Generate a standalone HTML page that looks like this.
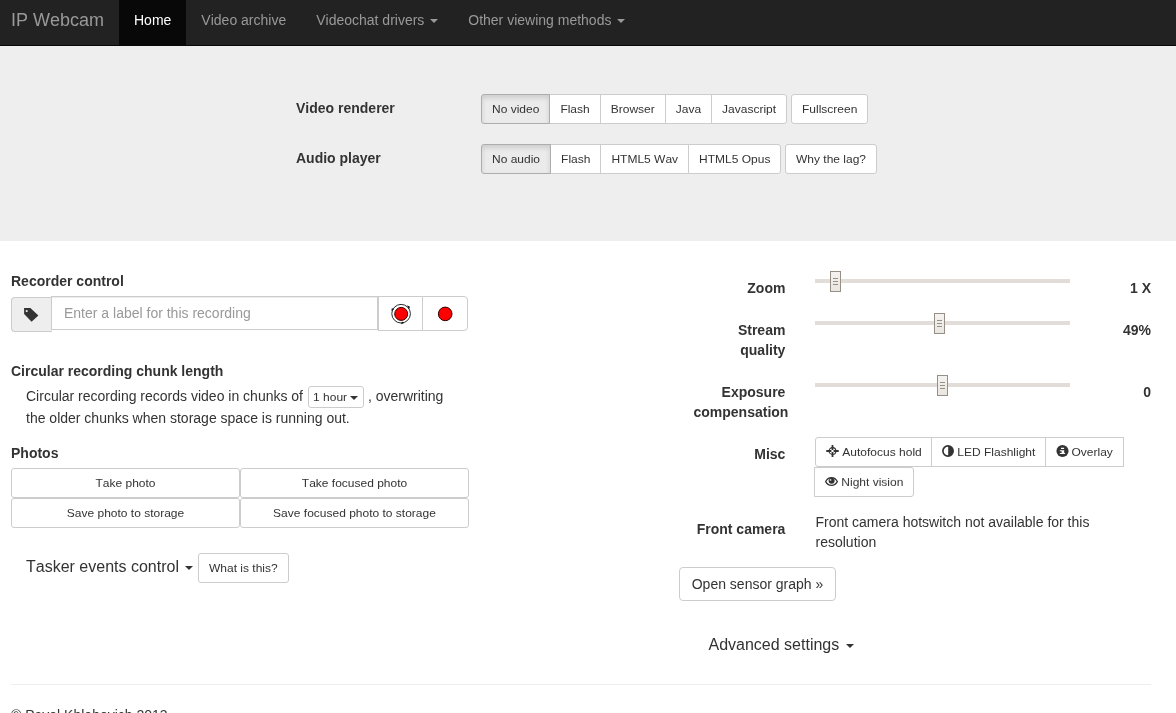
<!DOCTYPE html>
<html lang="en">
<head>
<meta charset="utf-8">
<title>IP Webcam</title>
<style>
*{box-sizing:border-box}
html,body{margin:0;padding:0}
html{overflow:hidden}
body{width:1176px;height:713px;overflow:hidden;position:relative;background:#fff;will-change:transform;
  font-family:"Liberation Sans",Arial,Helvetica,sans-serif;font-size:14px;line-height:20px;color:#333;font-kerning:none;font-variant-ligatures:none}
a{color:#333;text-decoration:none}
b,label,.lbl{font-weight:bold}

/* navbar */
.navbar{position:absolute;left:0;top:-5px;width:1176px;height:51px;background:#222;border-bottom:1px solid #080808}
.brand{position:absolute;left:11px;top:15px;font-size:18px;line-height:20px;color:#999}
.nav{position:absolute;top:0;left:119px;height:50px;margin:0;padding:0;list-style:none}
.nav li{float:left;height:50px;padding:15px 15px;color:#999;font-size:14px;line-height:20px}
.nav li.active{background:#080808;color:#fff}
.caret{display:inline-block;width:0;height:0;margin-left:2px;vertical-align:middle;
  border-top:4px solid;border-right:4px solid transparent;border-left:4px solid transparent}

/* grey top */
.jumbo{position:absolute;left:0;top:46px;width:1176px;height:195px;background:#eee}
.abs{position:absolute}
.btn{display:inline-block;float:left;background:#fff;border:1px solid #ccc;color:#333;
  font-size:12px;line-height:18px;padding:5px 10px;border-radius:3px;text-align:center;white-space:nowrap}
.grp{position:absolute;height:30px}
.grp .btn{border-radius:0;margin-left:-1px}
.grp .btn:first-child{margin-left:0;border-radius:3px 0 0 3px}
.grp .btn:last-child{border-radius:0 3px 3px 0}
.btn.active{background:#ebebeb;border-color:#adadad;box-shadow:inset 0 3px 5px rgba(0,0,0,.125);position:relative;z-index:2}
.flabel{position:absolute;font-weight:bold;font-size:14px;line-height:20px;white-space:nowrap}
.rlabel{position:absolute;font-weight:bold;text-align:right;width:140px;left:645.4px}
.val{position:absolute;font-weight:bold;text-align:right;width:60px;left:1091px}

/* lower */
.h{position:absolute;left:11px;font-weight:bold;white-space:nowrap}
.addon{position:absolute;left:11px;top:297px;width:41px;height:35px;background:#eee;border:1px solid #ccc;border-right:0;border-radius:4px 0 0 4px}
.inp{position:absolute;left:51px;top:296px;width:327px;height:34px;background:#fff;border:1px solid #ccc;
  box-shadow:inset 0 1px 1px rgba(0,0,0,.075);padding:6px 12px;color:#999;font-size:14px;line-height:20px;white-space:nowrap}
.rbtn{position:absolute;top:296px;height:35px;background:#fff;border:1px solid #ccc}
.para{position:absolute;left:26px;top:385px;width:443px;line-height:22px;white-space:nowrap}
.xs{display:inline-block;vertical-align:middle;border:1px solid #ccc;border-radius:3px;background:#fff;font-size:12px;line-height:18px;padding:1px 0;width:56.5px;text-align:center;height:22px;position:relative;top:0;margin:-3px 0 -3px .6px}
.pb{position:absolute;width:229px;height:30px;border:1px solid #ccc;border-radius:3px;background:#fff;font-size:12px;line-height:18px;padding:5px 10px;text-align:center;white-space:nowrap}
.big{position:absolute;font-size:16px;line-height:22px;white-space:nowrap}
.track{position:absolute;left:815px;width:255px;height:4px;background:#e2ddd9}
.thumb{position:absolute;width:11px;height:21px;background:linear-gradient(#f4f2ef,#eae6e1);border:1px solid #968f86}
.thumb i{position:absolute;left:2px;width:5px;height:1px;background:#968f86}
.txt{position:absolute;white-space:nowrap}
.hr{position:absolute;left:11px;top:684px;width:1140px;height:1px;background:#eee}
.ic{display:inline-block;vertical-align:middle;position:relative;top:-1px}
.t{display:inline-block;transform:scaleY(.88);transform-origin:0 13px}
</style>
</head>
<body>

<div class="navbar">
  <span class="brand">IP Webcam</span>
  <ul class="nav">
    <li class="active">Home</li>
    <li>Video archive</li>
    <li>Videochat drivers <span class="caret"></span></li>
    <li>Other viewing methods <span class="caret"></span></li>
  </ul>
</div>

<div class="jumbo"></div>

<!-- video renderer -->
<div class="flabel" style="left:296px;top:98px">Video renderer</div>
<div class="grp" style="left:481px;top:94px">
  <span class="btn active"><span class="t">No video</span></span><span class="btn"><span class="t">Flash</span></span><span class="btn"><span class="t">Browser</span></span><span class="btn"><span class="t">Java</span></span><span class="btn"><span class="t">Javascript</span></span>
</div>
<span class="btn abs" style="left:791px;top:94px"><span class="t">Fullscreen</span></span>

<!-- audio player -->
<div class="flabel" style="left:296px;top:148px">Audio player</div>
<div class="grp" style="left:481px;top:144px">
  <span class="btn active"><span class="t">No audio</span></span><span class="btn"><span class="t">Flash</span></span><span class="btn"><span class="t">HTML5 Wav</span></span><span class="btn"><span class="t">HTML5 Opus</span></span>
</div>
<span class="btn abs" style="left:785px;top:144px"><span class="t">Why the lag?</span></span>


<!-- left column -->
<div class="h" style="top:271px">Recorder control</div>
<div class="addon"><svg style="position:absolute;left:11.2px;top:9px" width="16" height="16" viewBox="0 0 16 16"><path fill="#333" fill-rule="evenodd" d="M1.1,1 L7.4,1 L15.4,8.6 L8.6,14.7 L1.1,7.1 Z M3.7,2.9 a1.1,1.1 0 1,0 0.01,0 Z"/></svg></div>
<div class="inp">Enter a label for this recording</div>
<div class="rbtn" style="left:378px;width:45px"><svg style="position:absolute;left:10px;top:5px" width="24" height="24" viewBox="0 0 24 24"><circle cx="12.1" cy="11.7" r="9.3" fill="#fff" stroke="#111" stroke-width="0.9"/><path fill="#111" d="M18,3.2 l3,1.6 l-1,2.4 z M2.4,9 l0.5,-3 l2,1.4 z M12,22.2 l3.2,-1.2 l-2.2,-1.6 z"/><circle cx="12.2" cy="11.9" r="6.5" fill="#f00" stroke="#300" stroke-width="1"/></svg></div>
<div class="rbtn" style="left:422px;width:46px;border-radius:0 4px 4px 0"><svg style="position:absolute;left:11px;top:5px" width="24" height="24" viewBox="0 0 24 24"><circle cx="11.2" cy="11.9" r="6.8" fill="#f00" stroke="#300" stroke-width="1"/></svg></div>

<div class="h" style="top:361px">Circular recording chunk length</div>
<div class="para">Circular recording records video in chunks of <span class="xs"><span class="t">1 hour</span> <span class="caret" style="margin-left:0"></span></span> , overwriting<br>the older chunks when storage space is running out.</div>

<div class="h" style="top:443px">Photos</div>
<div class="pb" style="left:11px;top:468px"><span class="t">Take photo</span></div>
<div class="pb" style="left:240px;top:468px"><span class="t">Take focused photo</span></div>
<div class="pb" style="left:11px;top:498px"><span class="t">Save photo to storage</span></div>
<div class="pb" style="left:240px;top:498px"><span class="t">Save focused photo to storage</span></div>

<div class="big" style="left:26px;top:556px">Tasker events control <span class="caret"></span></div>
<span class="btn abs" style="left:198px;top:553px"><span class="t">What is this?</span></span>

<!-- right column -->
<div class="rlabel" style="top:278px">Zoom</div>
<div class="track" style="top:279px"></div>
<div class="thumb" style="left:830px;top:271px"><i style="top:6px"></i><i style="top:9px"></i><i style="top:12px"></i></div>
<div class="val" style="top:278px">1 X</div>

<div class="rlabel" style="top:320px">Stream<br>quality</div>
<div class="track" style="top:321px"></div>
<div class="thumb" style="left:934px;top:313px"><i style="top:6px"></i><i style="top:9px"></i><i style="top:12px"></i></div>
<div class="val" style="top:320px">49%</div>

<div class="rlabel" style="top:382px">Exposure</div>
<div class="flabel" style="left:693.5px;top:402px">compensation</div>
<div class="track" style="top:383px"></div>
<div class="thumb" style="left:937px;top:375px"><i style="top:6px"></i><i style="top:9px"></i><i style="top:12px"></i></div>
<div class="val" style="top:382px">0</div>

<div class="rlabel" style="top:444px">Misc</div>
<div class="grp" style="left:815px;top:437px">
  <span class="btn" style="width:117px"><svg class="ic" style="top:-1.6px" width="13" height="12" viewBox="0 0 13 12"><circle cx="6.5" cy="6" r="3.4" fill="none" stroke="#333" stroke-width="1.1"/><path stroke="#333" stroke-width="2" d="M0.3,6H5.4M7.6,6H12.7"/><path stroke="#333" stroke-width="1.8" d="M6.5,0.1V4.9M6.5,7.1V11.9"/></svg> <span class="t">Autofocus hold</span></span><span class="btn" style="width:115px"><svg class="ic" style="top:-2px" width="12" height="12" viewBox="0 0 12 12"><circle cx="6" cy="6" r="5.1" fill="none" stroke="#333" stroke-width="1.7"/><path fill="#333" d="M6.2,0.9 A5.1,5.1 0 0 1 6.2,11.1 Z"/></svg> <span class="t">LED Flashlight</span></span><span class="btn" style="width:79px;border-radius:0"><svg class="ic" style="top:-1.6px;left:.4px;overflow:visible" width="12" height="12" viewBox="0 0 12 12"><circle cx="5.5" cy="6" r="6.05" fill="#333"/><path fill="#fff" d="M4,2.8h3.1v1.3h-3.1z M2.8,5.2h4.4v2.9h0.9v1h-5.3v-1h1.8v-1.9h-1.8z"/></svg> <span class="t">Overlay</span></span>
</div>
<span class="btn abs" style="left:814px;top:467px;width:100px;border-radius:0 3px 3px 0"><svg class="ic" style="top:-1.4px" width="13" height="11" viewBox="0 0 13 11"><path fill="none" stroke="#333" stroke-width="1.3" d="M0.7,5.6 C3.2,0.2 9.8,0.2 12.3,5.6 C9.8,10.6 3.2,10.6 0.7,5.6 Z"/><circle cx="6.6" cy="4.7" r="3" fill="#333"/><circle cx="5.5" cy="3.9" r="0.9" fill="#ddd"/></svg> <span class="t">Night vision</span></span>

<div class="rlabel" style="top:519px">Front camera</div>
<div class="txt" style="left:815.5px;top:512px">Front camera hotswitch not available for this<br>resolution</div>

<div class="txt" style="left:679px;top:567px;height:34px;border:1px solid #ccc;border-radius:4px;background:#fff;padding:6px 0;width:157px;text-align:center;line-height:20px">Open sensor graph »</div>

<div class="big" style="left:708.5px;top:634px">Advanced settings <span class="caret"></span></div>

<div class="hr"></div>
<div class="txt" style="left:11px;top:705px">© Pavel Khlebovich 2013</div>

</body>
</html>
